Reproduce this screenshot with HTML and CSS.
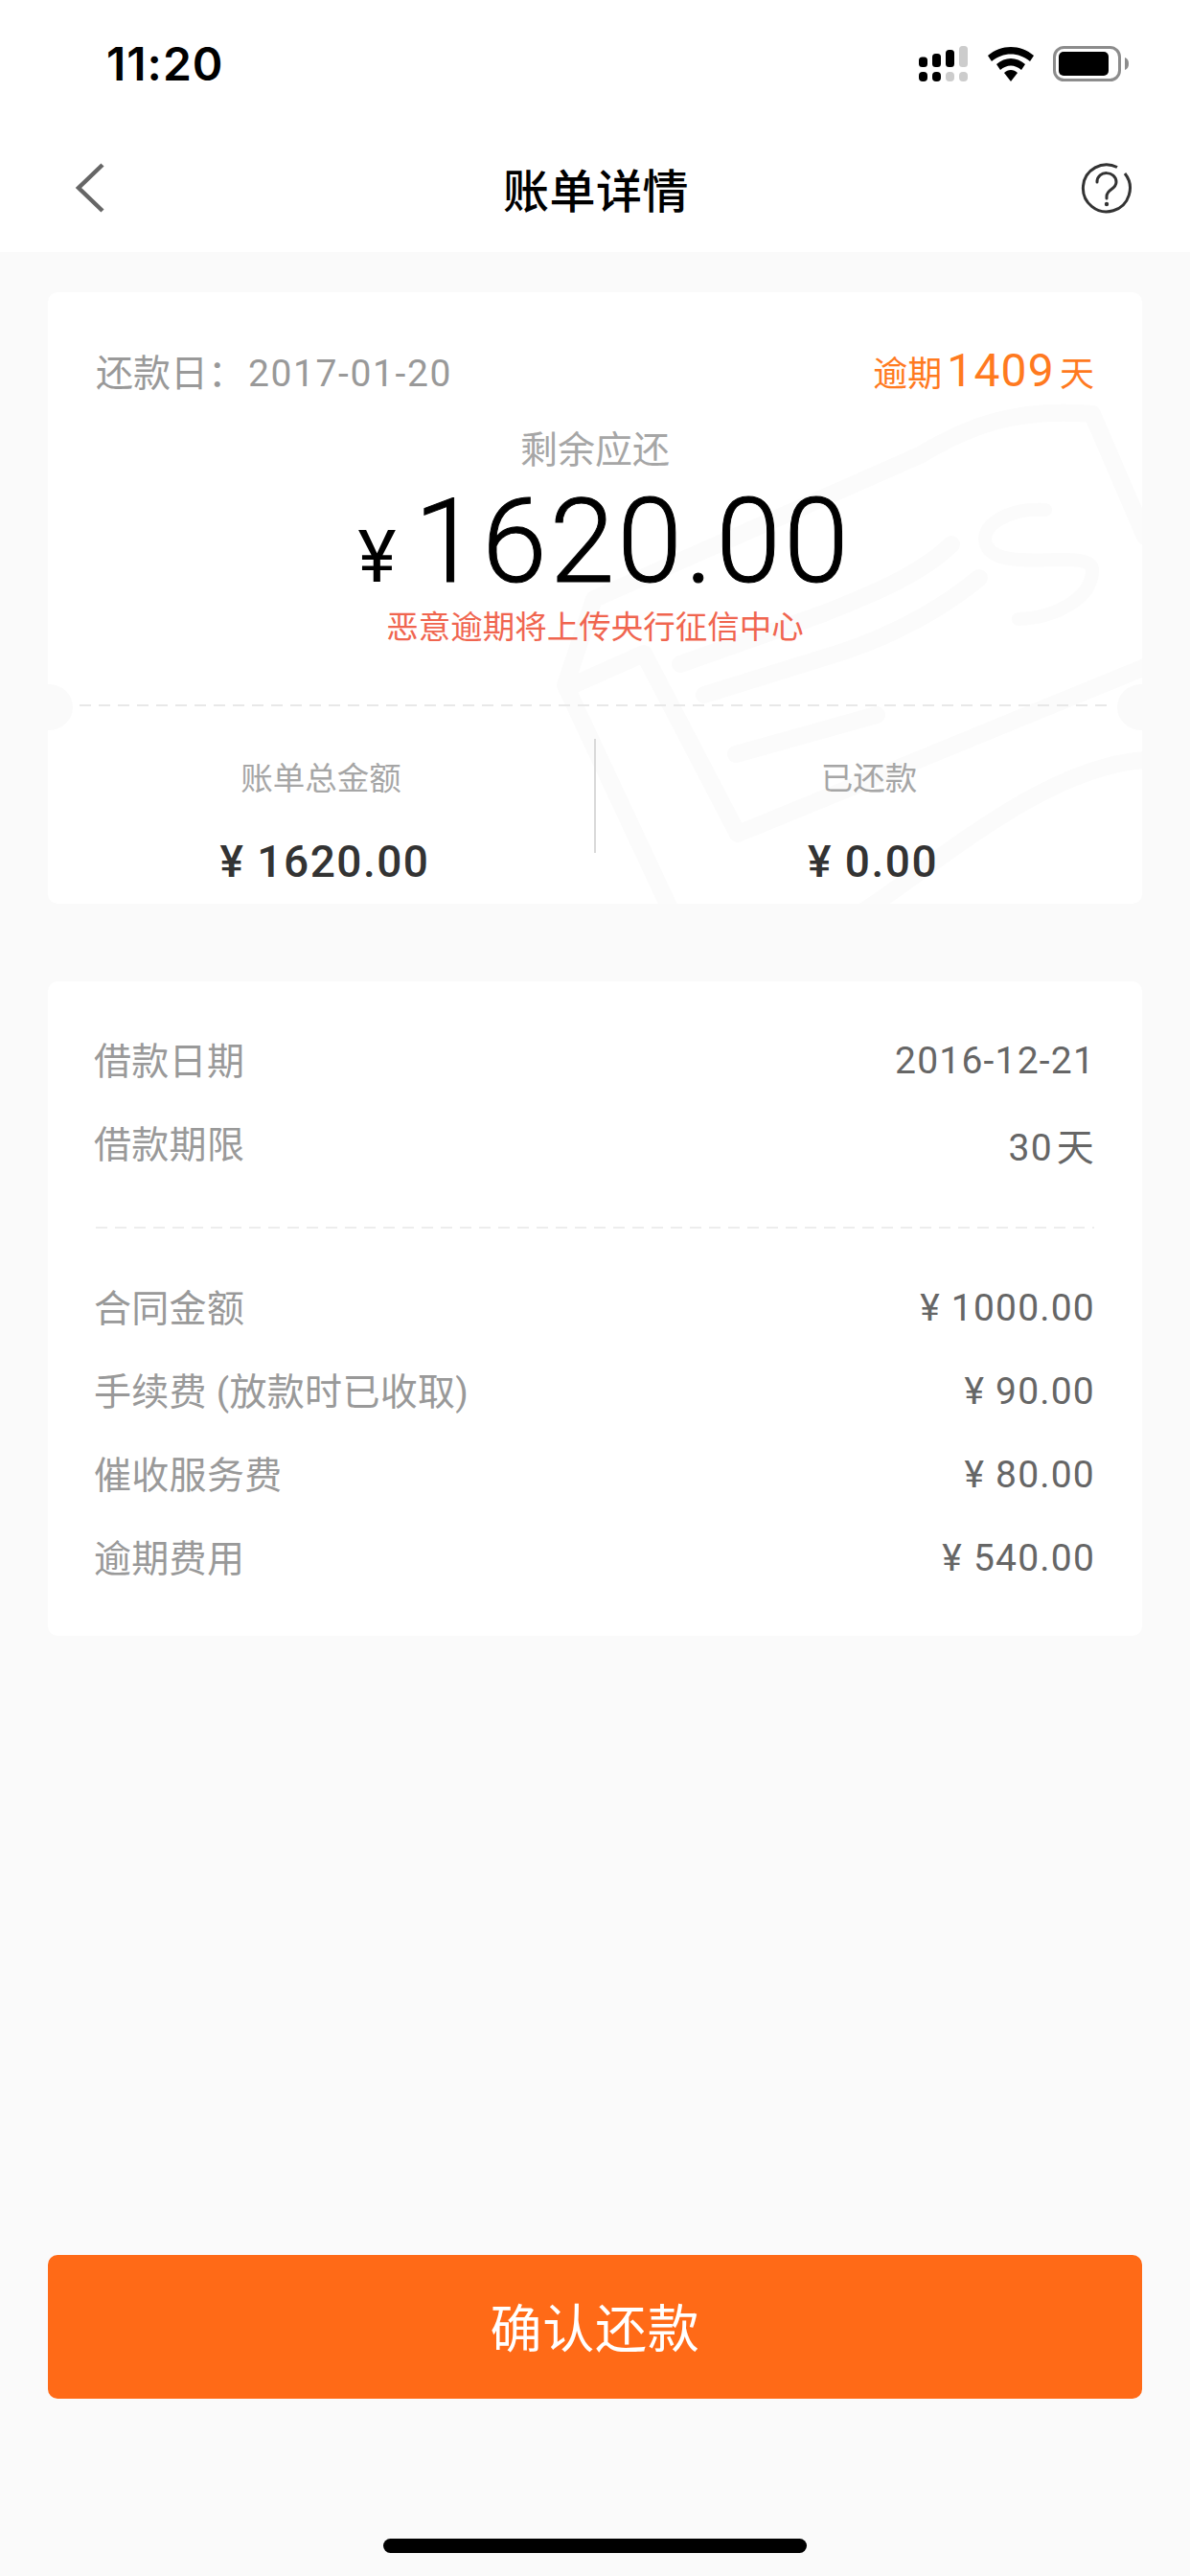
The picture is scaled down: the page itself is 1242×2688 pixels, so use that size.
FILE: index.html
```html
<!DOCTYPE html>
<html lang="zh-CN">
<head>
  <meta charset="UTF-8">
  <meta name="viewport" content="width=device-width, initial-scale=1.0">
  <title>账单详情</title>
  <link rel="stylesheet" href="styles.css">
</head>
<body>
  <header class="top">
    <div class="status-bar">
      <span class="time">11:20</span>
      <div class="status-icons">
        <svg class="icon-signal" width="52" height="38" viewBox="0 0 52 38">
          <rect x="0" y="11.5" width="9" height="10.5" rx="3.5" fill="#000"/>
          <rect x="14" y="8" width="9" height="14" rx="3.5" fill="#000"/>
          <rect x="28" y="4" width="9" height="18" rx="3.5" fill="#000"/>
          <rect x="42" y="0" width="9" height="22" rx="3.5" fill="#ccc"/>
          <rect x="0" y="27" width="9" height="10" rx="4" fill="#000"/>
          <rect x="14" y="27" width="9" height="10" rx="4" fill="#000"/>
          <rect x="28" y="27" width="9" height="10" rx="4" fill="#ccc"/>
          <rect x="42" y="27" width="9" height="10" rx="4" fill="#ccc"/>
        </svg>
        <svg class="icon-wifi" width="48" height="36" viewBox="0 0 48 36">
          <path d="M0 9 C14 -3 34 -3 48 9 L44 15 C32 5 16 5 4 15 Z" fill="#000"/>
          <path d="M9 18 C18 10 30 10 39 18 L35 24 C28 18 20 18 13 24 Z" fill="#000"/>
          <path d="M17 27 C21 23 27 23 31 27 L24 36 Z" fill="#000"/>
        </svg>
        <svg class="icon-battery" width="80" height="37" viewBox="0 0 80 37">
          <rect x="1.5" y="1.5" width="68" height="34" rx="10" fill="none" stroke="#8c8c8c" stroke-width="3"/>
          <rect x="6" y="6" width="52" height="25" rx="5" fill="#000"/>
          <path d="M75 12 C78 13 79 15.500 79 18.500 C79 21.500 78 24 75 25 Z" fill="#8c8c8c"/>
        </svg>
      </div>
    </div>
    <nav class="nav-bar">
      <svg class="nav-icon" width="40" height="60" viewBox="0 0 40 60">
        <path d="M31 6 L6 30 L31 54" fill="none" stroke="#666" stroke-width="4.500"/>
      </svg>
      <h1 class="nav-title">账单详情</h1>
      <svg class="nav-icon" width="54" height="54" viewBox="0 0 54 54">
        <path d="M38 5.500 A24.500 24.500 0 1 0 46 12" fill="none" stroke="#333" stroke-width="3"/>
        <path d="M17 21 C17 8 37 9 37 21 C37 29 27 28 27 36 L27 38" fill="none" stroke="#333" stroke-width="3" stroke-linecap="round"/>
        <circle cx="27" cy="44" r="2.200" fill="#333"/>
      </svg>
    </nav>
  </header>

  <main class="content">
    <section class="card bill-card">
      <!-- faint watermark behind the bill, page coords minus card origin -->
      <svg class="watermark" width="1142" height="638" viewBox="50 305 1142 638">
        <g fill="none" stroke="#fbfbfb" stroke-width="18" stroke-linecap="round" stroke-linejoin="round">
          <path d="M1195 560 L1140 432 C1060 425 1010 445 960 475 L620 625 L590 715 L700 950"/>
          <path d="M600 714 L672 682 L770 870 L1195 696"/>
          <path d="M895 955 C980 900 1090 800 1195 793"/>
          <path d="M710 693 L860 640 C910 620 960 600 993 568"/>
          <path d="M735 725 L880 680 C940 660 990 630 1022 603"/>
          <path d="M768 787 L915 746"/>
          <path d="M1091 532 C1050 530 1020 550 1030 570 C1045 600 1140 570 1140 595 C1140 625 1100 645 1063 646" stroke-width="14"/>
        </g>
      </svg>
      <div class="bill-top">
        <div class="due-row">
          <span class="due-date">还款日：<span class="due-value">2017-01-20</span></span>
          <span class="overdue">逾期<b class="overdue-days">1409</b>天</span>
        </div>
        <p class="remain-label">剩余应还</p>
        <p class="remain-amount"><span class="remain-yen">¥</span>1620.00</p>
        <p class="warning">恶意逾期将上传央行征信中心</p>
      </div>
      <div class="ticket-line"></div>
      <span class="notch notch-left"></span>
      <span class="notch notch-right"></span>
      <div class="bill-stats">
        <div class="stat">
          <span class="stat-label">账单总金额</span>
          <span class="stat-value">¥ 1620.00</span>
        </div>
        <div class="stat-sep"></div>
        <div class="stat">
          <span class="stat-label">已还款</span>
          <span class="stat-value">¥ 0.00</span>
        </div>
      </div>
    </section>

    <section class="card detail-card">
      <div class="detail-group">
        <div class="row"><span class="row-label">借款日期</span><span class="row-value">2016-12-21</span></div>
        <div class="row"><span class="row-label">借款期限</span><span class="row-value">30<span class="row-unit">天</span></span></div>
      </div>
      <div class="detail-line"></div>
      <div class="detail-group">
        <div class="row"><span class="row-label">合同金额</span><span class="row-value">¥ 1000.00</span></div>
        <div class="row"><span class="row-label">手续费 (放款时已收取)</span><span class="row-value">¥ 90.00</span></div>
        <div class="row"><span class="row-label">催收服务费</span><span class="row-value">¥ 80.00</span></div>
        <div class="row"><span class="row-label">逾期费用</span><span class="row-value">¥ 540.00</span></div>
      </div>
    </section>
  </main>

  <footer class="bottom">
    <button class="confirm" type="button">确认还款</button>
    <div class="home-bar"></div>
  </footer>
</body>
</html>
```

FILE: styles.css
```css
* {
  box-sizing: border-box;
}
body {
  margin: 0;
  width: 1242px;
  height: 2688px;
  display: flex;
  flex-direction: column;
  background-color: #fafafa;
  font-family: Roboto, "Noto Sans CJK SC", sans-serif;
}
p, h1 {
  margin: 0;
}

.top {
  background: #fff;
}
.status-bar {
  height: 133px;
  padding: 0 63px 0 111px;
  display: flex;
  align-items: center;
  justify-content: space-between;
}
.time {
  font-family: Inter, sans-serif;
  font-size: 48px;
  font-weight: 600;
  letter-spacing: 1px;
  color: #000;
}
.status-icons {
  display: flex;
  align-items: center;
  gap: 20px;
}
.nav-bar {
  height: 130px;
  padding: 0 60px 4px 76px;
  display: flex;
  align-items: center;
  justify-content: space-between;
}
.nav-title {
  font-size: 48px;
  font-weight: 500;
  letter-spacing: 0.5px;
  color: #000;
}

.content {
  flex: 1;
  padding: 42px 50px 0;
  display: flex;
  flex-direction: column;
  gap: 81px;
}
.card {
  background: #fff;
  border-radius: 10px;
}

.bill-card {
  position: relative;
  height: 638px;
  overflow: hidden;
}
.watermark {
  position: absolute;
  left: 0;
  top: 0;
}
.bill-top {
  position: relative;
  height: 430px;
  padding: 59px 50px 0;
  text-align: center;
}
.due-row {
  display: flex;
  justify-content: space-between;
  align-items: baseline;
  height: 46px;
  line-height: 46px;
}
.due-date {
  font-size: 39px;
  color: #999;
}
.due-value {
  margin-left: 3px;
  letter-spacing: 1.6px;
}
.overdue {
  font-size: 36px;
  color: #ff7a1f;
}
.overdue-days {
  font-size: 48px;
  font-weight: 400;
  letter-spacing: 1.200px;
  margin: 0 5px 0 5px;
}
.remain-label {
  margin-top: 35px;
  font-size: 39px;
  line-height: 50px;
  color: #a6a6a6;
}
.remain-amount {
  margin-top: 21px;
  padding-left: 20px;
  font-size: 122px;
  font-weight: 300;
  line-height: 100px;
  letter-spacing: 3px;
  -webkit-text-stroke: 1px #000;
  color: #000;
}
.remain-yen {
  font-size: 76px;
  font-weight: 400;
  -webkit-text-stroke: 0;
  margin-right: 16px;
}
.warning {
  margin-top: 4px;
  font-size: 33.500px;
  line-height: 40px;
  color: #f0654f;
}
.ticket-line {
  position: relative;
  margin: 0 33px;
  height: 2px;
  background: repeating-linear-gradient(to right, #e8e8e8 0 12px, transparent 12px 20px);
}
.notch {
  position: absolute;
  top: 409px;
  width: 50px;
  height: 48px;
  border-radius: 50%;
  background: #fafafa;
}
.notch-left {
  left: -24px;
}
.notch-right {
  right: -24px;
}
.bill-stats {
  position: relative;
  display: flex;
  padding-top: 34px;
}
.stat {
  flex: 1;
  height: 170px;
  display: flex;
  flex-direction: column;
  align-items: center;
}
.stat-label {
  margin-top: 20px;
  font-size: 33.500px;
  line-height: 44px;
  color: #a6a6a6;
}
.stat-value {
  margin-top: 39px;
  margin-left: 8px;
  font-size: 46px;
  font-weight: 500;
  line-height: 50px;
  letter-spacing: 1.500px;
  color: #333;
}
.stat-sep {
  width: 2px;
  height: 119px;
  background: #d9d9d9;
}

.detail-card {
  height: 683px;
  padding: 38px 50px 0 48px;
}
.row {
  height: 87px;
  display: flex;
  align-items: center;
  justify-content: space-between;
  font-size: 39px;
}
.row-label {
  margin-bottom: 3px;
  color: #999;
  letter-spacing: 0.3px;
}
.row-value {
  margin-top: 2px;
  margin-right: -1px;
  color: #666;
  letter-spacing: 1.200px;
}
.row-unit {
  margin-left: 4px;
}
.detail-line {
  height: 2px;
  margin: 44px 0 38px 2px;
  background: repeating-linear-gradient(to right, #ededed 0 12px, transparent 12px 20px);
}

.bottom {
  padding: 0 50px;
  display: flex;
  flex-direction: column;
  align-items: center;
}
.confirm {
  width: 100%;
  height: 150px;
  padding: 0 0 4px;
  border: none;
  border-radius: 10px;
  background: #ff6a17;
  color: #fff;
  font-family: inherit;
  font-size: 54px;
  letter-spacing: 0.8px;
}
.home-bar {
  width: 442px;
  height: 15px;
  margin: 146px 0 24px;
  border-radius: 8px;
  background: #000;
}
```
